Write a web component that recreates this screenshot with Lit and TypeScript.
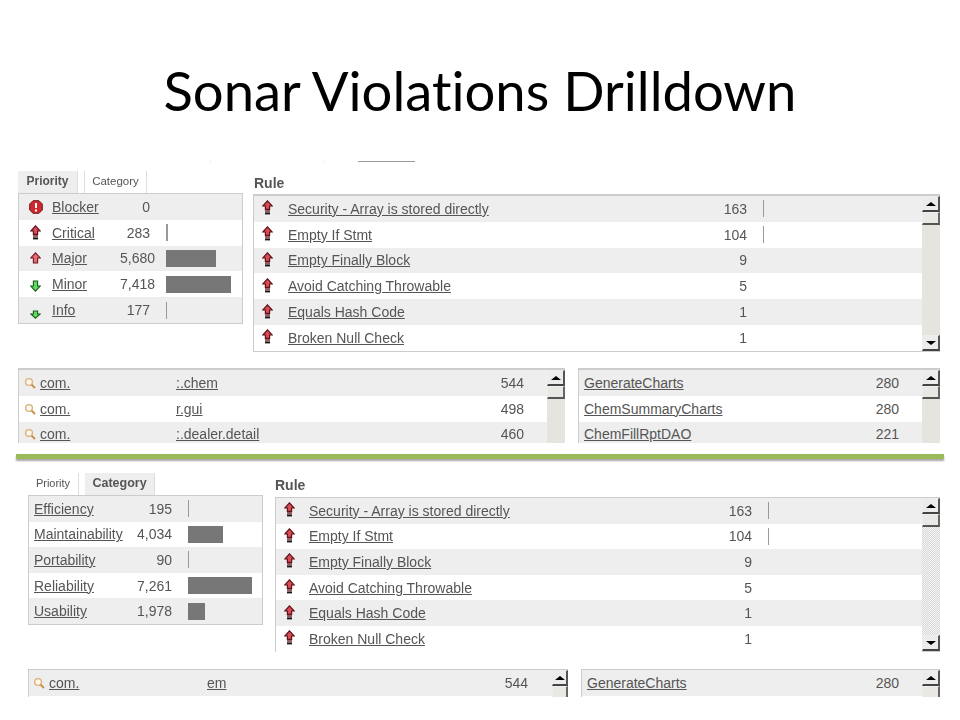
import { LitElement, html, css, svg } from "lit";
import { customElement } from "lit/decorators.js";

type Kind = "blocker" | "critical" | "major" | "minor" | "info";

const icon = (k: Kind) => {
  if (k === "blocker")
    return html`<svg class="ic" width="14" height="14" viewBox="0 0 14 14">
      <path d="M4 .7h6L13.3 4v6L10 13.3H4L.7 10V4z" fill="#d0282e" stroke="#6e1a1e" stroke-width="1"/>
      <path d="M7 3v5" stroke="#fff" stroke-width="2"/><path d="M7 9.4v2" stroke="#fff" stroke-width="2"/>
    </svg>`;
  if (k === "critical")
    return html`<svg class="ic" width="11" height="15" viewBox="0 0 11 15">
      <path d="M5.5.8 10.2 6H7.6v3.4H3.4V6H.8z" fill="#dc4a54" stroke="#5e141b" stroke-width="1.2"/>
      <path d="M3 11h5" stroke="#6a1a20" stroke-width="1.4"/><path d="M3 13.4h5" stroke="#1d1213" stroke-width="2"/>
    </svg>`;
  if (k === "major")
    return html`<svg class="ic" width="11" height="12" viewBox="0 0 11 12">
      <path d="M5.5.8 10.2 6H7.6v5H3.4V6H.8z" fill="#ea6a72" stroke="#701a22" stroke-width="1.1"/>
    </svg>`;
  if (k === "minor")
    return html`<svg class="ic low" width="11" height="12" viewBox="0 0 11 12">
      <path d="M5.5 11.2 10.2 6H7.6V1H3.4V6H.8z" fill="#5fdc5c" stroke="#1b5a1c" stroke-width="1.1"/>
    </svg>`;
  return html`<svg class="ic lower" width="11" height="9" viewBox="0 0 11 9">
    <path d="M5.5 8.2 10.2 4 7.6 4V1H3.4v3H.8z" fill="#5fdc5c" stroke="#1b5a1c" stroke-width="1.1"/>
  </svg>`;
};

const lens = svg`<circle cx="5" cy="5" r="3.4" fill="#fff8ea" stroke="#d9b27c" stroke-width="1.4"/><path d="M7.6 7.6 11 11" stroke="#c98f4a" stroke-width="2"/>`;

const prio: [Kind, string, string, number][] = [
  ["blocker", "Blocker", "0", 0],
  ["critical", "Critical", "283", 2],
  ["major", "Major", "5,680", 50],
  ["minor", "Minor", "7,418", 65],
  ["info", "Info", "177", 1],
];
const cats: [string, string, number][] = [
  ["Efficiency", "195", 1],
  ["Maintainability", "4,034", 35],
  ["Portability", "90", 1],
  ["Reliability", "7,261", 64],
  ["Usability", "1,978", 17],
];
const rules: [string, string, number][] = [
  ["Security - Array is stored directly", "163", 1],
  ["Empty If Stmt", "104", 1],
  ["Empty Finally Block", "9", 0],
  ["Avoid Catching Throwable", "5", 0],
  ["Equals Hash Code", "1", 0],
  ["Broken Null Check", "1", 0],
];

@customElement("app-root")
export class AppRoot extends LitElement {
  static styles = css`
    :host { display: block; width: 960px; height: 720px; overflow: hidden; background: #fff; font-family: "Liberation Sans", Arial, sans-serif; font-size: 14px; color: #555; }
    h1 { margin: 0; height: 161px; padding-top: 60px; box-sizing: border-box; text-align: center; font: 400 54.4px/60px Lato, sans-serif; font-variant-ligatures: none; color: #000; }
    .scraps { display: flex; height: 1px; padding-left: 210px; }
    .scraps i { width: 57px; background: #999; }
    .scraps b { width: 1px; background: #ddd; margin-right: 112px; }
    .scraps b + b { margin-right: 34px; }
    .sheet { filter: blur(0.35px); }
    .top { display: flex; align-items: flex-start; }
    .s1 { margin: 9px 0 0 18px; }
    .s2 { margin: 14px 0 0 28px; }
    .s1 .col-l { width: 225px; margin-right: 10px; }
    .s2 .col-l { width: 235px; margin-right: 12px; }
    .s1 .col-r { width: 687px; }
    .s2 .col-r { width: 665px; }
    .tabs { display: flex; height: 22px; font-size: 12px; }
    .tab { display: flex; align-items: center; justify-content: center; box-sizing: border-box; padding-bottom: 3px; }
    .tab.on { background: #eee; font-weight: 700; border-right: 1px solid #ddd; }
    .tab.off { background: #fff; border-right: 1px solid #ddd; border-left: 1px solid #ddd; }
    .s1 .p { width: 60px; margin-right: 6px; }
    .s1 .c { width: 63px; font-size: 11.5px; }
    .s2 .p { width: 51px; margin-right: 6px; font-size: 11px; border-left: 0; }
    .s2 .c { width: 70px; font-size: 12.5px; }
    .box { border: 1px solid #ccc; box-sizing: border-box; }
    .row { display: grid; height: 25.8px; align-items: center; background: #fff; }
    .s2 .row { height: 25.6px; }
    .row:nth-child(odd) { background: #eee; }
    a { color: #555; text-decoration: underline; white-space: nowrap; }
    .num { text-align: right; }
    .bar { height: 17px; background: #777; }
    .thin { background: #999; }
    .ic { display: block; margin: 0 auto; }
    .low { position: relative; top: 2px; }
    .lower { position: relative; top: 4px; }
    .rup { position: relative; top: -1px; }
    .rup .ic { margin: 0 0 0 8px; }
    .s1 .prio { grid-template-columns: 33px 68px 30px 72px; }
    .prio .bar { margin-left: 16px; }
    .s2 .prio { grid-template-columns: 94px 44px 72px; padding-left: 5px; }
    .head { height: 23px; font-weight: 700; display: flex; align-items: center; box-sizing: border-box; }
    .s1 .head { padding-left: 1px; }
    .s2 .head { height: 24px; }
    .s1 .rule-grid { grid-template-columns: 34px 1fr 50px 175px; }
    .s2 .rule-grid { grid-template-columns: 33px 1fr 50px 170px; }
    .rule-grid .bar { margin-left: 16px; }
    .scroll-box { display: flex; border-right: 0; }
    .rows { flex: 1; min-width: 0; }
    .sb { width: 18px; flex: none; display: flex; flex-direction: column; background: #e6e4df; }
    .sb.dither { background: repeating-conic-gradient(#d8d8d8 0 25%, #f4f4f4 0 50%) 0 0 / 2px 2px; }
    .btn { height: 16px; flex: none; background: #ececec; border-style: solid; border-width: 1px 2px 2px 1px; border-color: #eee #555 #444 #eee; box-sizing: border-box; display: flex; align-items: center; justify-content: center; }
    .thumb { height: 13px; flex: none; background: #e9e8e4; border-style: solid; border-width: 1px 2px 2px 1px; border-color: #eee #666 #555 #eee; box-sizing: border-box; }
    .tri-u { width: 0; height: 0; border: 5px solid transparent; border-top: 0; border-bottom: 4px solid #000; }
    .tri-d { width: 0; height: 0; border: 5px solid transparent; border-bottom: 0; border-top: 4px solid #000; }
    .push { margin-top: auto; }
    .s1 .full { height: 158px; border-top-width: 2px; }
    .s2 .full { height: 155px; }
    .bottom { display: flex; overflow: hidden; }
    .bottom .box { border-bottom: 0; overflow: hidden; }
    .s1b { margin: 16px 0 0 18px; height: 75px; }
    .s1b .box { border-top-width: 2px; }
    .s2b { margin: 17px 0 0 28px; height: 28px; }
    .s1b .l { width: 547px; margin-right: 13px; }
    .s2b .l { width: 540px; margin-right: 13px; }
    .s2b .l .sb { width: 16px; }
    .s1b .r { width: 362px; }
    .s2b .r { width: 359px; }
    .s1b .pk { grid-template-columns: 21px 1fr 33px; padding-right: 23px; }
    .s2b .pk { grid-template-columns: 20px 1fr 33px; padding-right: 24px; }
    .fl { grid-template-columns: 1fr 40px; padding-left: 5px; padding-right: 23px; }
    .cut { display: grid; }
    .s1b .cut { grid-template-columns: 136px auto; }
    .s2b .cut { grid-template-columns: 158px auto; }
    .lens { display: block; margin: 0 auto; }
    .rule-line { height: 5px; margin: 11px 16px 0; background: #9bbb59; box-shadow: 0 2px 2px rgba(0,0,0,.35); }
  `;

  private sb(full: boolean, dither = false) {
    return html`<div class="sb ${dither ? "dither" : ""}">
      <div class="btn"><div class="tri-u"></div></div>
      <div class="thumb"></div>
      ${full ? html`<div class="btn push"><div class="tri-d"></div></div>` : ""}
    </div>`;
  }

  private ruleTable(dither: boolean) {
    return html`<div class="box scroll-box full">
      <div class="rows">
        ${rules.map(([n, c, w]) => html`<div class="row rule-grid">
          <div class="rup">${icon("critical")}</div>
          <div><a>${n}</a></div>
          <div class="num">${c}</div>
          <div>${w ? html`<div class="bar thin" style="width:${w}px"></div>` : ""}</div>
        </div>`)}
      </div>
      ${this.sb(true, dither)}
    </div>`;
  }

  private pkgRows(rows: [string, string, string][]) {
    return rows.map(([a, b, c]) => html`<div class="row pk">
      <svg class="lens" width="12" height="12" viewBox="0 0 12 12">${lens}</svg>
      <div class="cut"><a>${a}</a><a>${b}</a></div>
      <div class="num">${c}</div>
    </div>`);
  }

  private flRows(rows: [string, string][]) {
    return rows.map(([a, c]) => html`<div class="row fl"><div><a>${a}</a></div><div class="num">${c}</div></div>`);
  }

  render() {
    return html`
      <h1>Sonar Violations Drilldown</h1>
      <div class="scraps"><b></b><b></b><i></i></div>
      <div class="sheet">
        <div class="top s1">
          <div class="col-l">
            <div class="tabs"><div class="tab on p">Priority</div><div class="tab off c">Category</div></div>
            <div class="box">
              ${prio.map(([k, n, c, w]) => html`<div class="row prio">
                ${icon(k)}
                <div><a>${n}</a></div>
                <div class="num">${c}</div>
                <div>${w ? html`<div class="bar ${w < 3 ? "thin" : ""}" style="width:${w}px"></div>` : ""}</div>
              </div>`)}
            </div>
          </div>
          <div class="col-r">
            <div class="head">Rule</div>
            ${this.ruleTable(false)}
          </div>
        </div>
        <div class="bottom s1b">
          <div class="box scroll-box l">
            <div class="rows">${this.pkgRows([["com.", ":.chem", "544"], ["com.", "r.gui", "498"], ["com.", ":.dealer.detail", "460"]])}</div>
            ${this.sb(false)}
          </div>
          <div class="box scroll-box r">
            <div class="rows">${this.flRows([["GenerateCharts", "280"], ["ChemSummaryCharts", "280"], ["ChemFillRptDAO", "221"]])}</div>
            ${this.sb(false)}
          </div>
        </div>
        <div class="rule-line"></div>
        <div class="top s2">
          <div class="col-l">
            <div class="tabs"><div class="tab off p">Priority</div><div class="tab on c">Category</div></div>
            <div class="box">
              ${cats.map(([n, c, w]) => html`<div class="row prio">
                <div><a>${n}</a></div>
                <div class="num">${c}</div>
                <div><div class="bar ${w < 3 ? "thin" : ""}" style="width:${w}px"></div></div>
              </div>`)}
            </div>
          </div>
          <div class="col-r">
            <div class="head">Rule</div>
            ${this.ruleTable(true)}
          </div>
        </div>
        <div class="bottom s2b">
          <div class="box scroll-box l">
            <div class="rows">${this.pkgRows([["com.", "em", "544"]])}</div>
            ${this.sb(false)}
          </div>
          <div class="box scroll-box r">
            <div class="rows">${this.flRows([["GenerateCharts", "280"]])}</div>
            ${this.sb(false)}
          </div>
        </div>
      </div>
    `;
  }
}
